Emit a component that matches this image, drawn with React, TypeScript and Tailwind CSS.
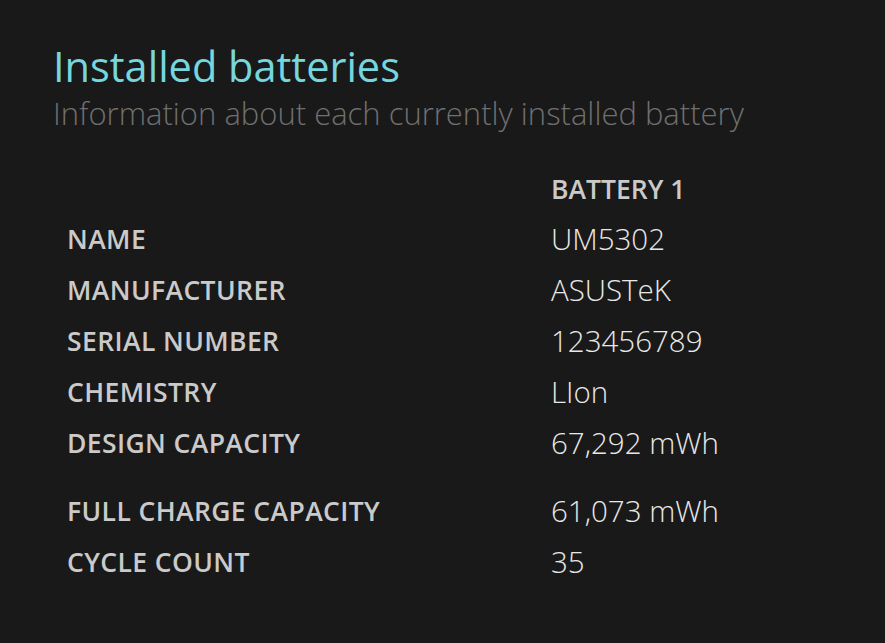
const rows = [
  { label: "NAME", value: "UM5302" },
  { label: "MANUFACTURER", value: "ASUSTeK" },
  { label: "SERIAL NUMBER", value: "123456789" },
  { label: "CHEMISTRY", value: "LIon" },
  { label: "DESIGN CAPACITY", value: "67,292 mWh" },
];

const rows2 = [
  { label: "FULL CHARGE CAPACITY", value: "61,073 mWh" },
  { label: "CYCLE COUNT", value: "35" },
];

const Row = ({ label, value }: { label: string; value: string }) => (
  <div className="grid grid-cols-[484px_1fr] h-[51px] items-center">
    <div className="text-[26.5px] font-semibold tracking-[0.4px] text-[#cacaca]">{label}</div>
    <div className="text-[29.5px] font-light text-[#e8e8e8]">{value}</div>
  </div>
);

export default function App() {
  return (
    <div
      className="w-[885px] h-[643px] bg-[#191919] overflow-hidden"
      style={{ fontFamily: '"Open Sans", "Noto Sans", sans-serif' }}
    >
      <div className="pl-[53px] pt-[41px]">
        <h1 className="text-[41.5px] leading-[50px] text-[#76d6de]">Installed batteries</h1>
        <p className="mt-[2px] text-[31px] leading-[40px] font-light text-[#6f6f6f]">
          Information about each currently installed battery
        </p>
      </div>
      <div className="pl-[67px] pt-[36px]">
        <div className="grid grid-cols-[484px_1fr] h-[45px] items-start">
          <div />
          <div className="h-[42px] flex items-center text-[26.5px] font-semibold text-[#cacaca]">
            BATTERY 1
          </div>
        </div>
        {rows.map((r) => (
          <Row key={r.label} label={r.label} value={r.value} />
        ))}
        <div className="h-[17px]" />
        {rows2.map((r) => (
          <Row key={r.label} label={r.label} value={r.value} />
        ))}
      </div>
    </div>
  );
}
